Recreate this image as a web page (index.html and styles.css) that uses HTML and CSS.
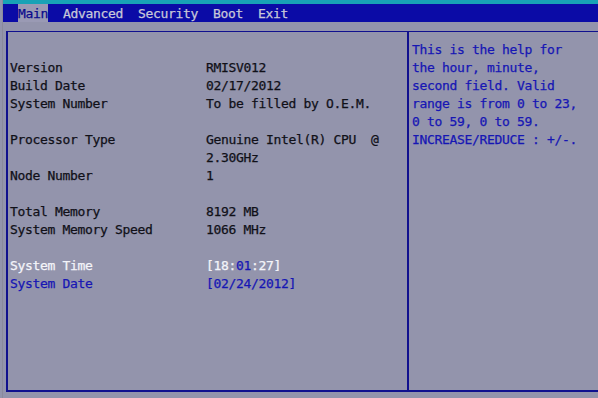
FILE: index.html
```html
<!DOCTYPE html>
<html lang="en">
<head>
    <meta charset="UTF-8">
    <title>BIOS Setup - Main</title>
    <link rel="stylesheet" href="styles.css">
</head>
<body>
    <div class="top-strip"></div>
    <div class="menu-bar">
        <span class="menu-item active">Main</span>
        <span class="menu-item">Advanced</span>
        <span class="menu-item">Security</span>
        <span class="menu-item">Boot</span>
        <span class="menu-item">Exit</span>
    </div>

    <div class="frame">
        <div class="info-panel">
            <div class="row blank"></div>
            <div class="row"><span class="label">Version</span><span class="value">RMISV012</span></div>
            <div class="row"><span class="label">Build Date</span><span class="value">02/17/2012</span></div>
            <div class="row"><span class="label">System Number</span><span class="value">To be filled by O.E.M.</span></div>
            <div class="row blank"></div>
            <div class="row"><span class="label">Processor Type</span><span class="value">Genuine Intel(R) CPU&nbsp;&nbsp;@</span></div>
            <div class="row"><span class="label"></span><span class="value">2.30GHz</span></div>
            <div class="row"><span class="label">Node Number</span><span class="value">1</span></div>
            <div class="row blank"></div>
            <div class="row"><span class="label">Total Memory</span><span class="value">8192 MB</span></div>
            <div class="row"><span class="label">System Memory Speed</span><span class="value">1066 MHz</span></div>
            <div class="row blank"></div>
            <div class="row selected"><span class="label">System Time</span><span class="value">[18:<span class="field">01</span>:27]</span></div>
            <div class="row editable"><span class="label">System Date</span><span class="value">[02/24/2012]</span></div>
        </div>

        <div class="help-panel">
            <p>This is the help for<br>
            the hour, minute,<br>
            second field. Valid<br>
            range is from 0 to 23,<br>
            0 to 59, 0 to 59.<br>
            INCREASE/REDUCE : +/-.</p>
        </div>
    </div>
</body>
</html>
```

FILE: styles.css
```css
/* page basics */
body {
    margin: 0;
    background-color: #9394ac;
    font-family: "DejaVu Sans Mono", "Liberation Mono", monospace;
    font-size: 13px;
    letter-spacing: -0.33px;
    color: #101018;
    -webkit-text-stroke: 0.25px;
    overflow: hidden;
    height: 398px;
    border-left: 1px solid #8a8a9c;
    margin-left: 2px;
}

/* thin cyan strip at the very top */
.top-strip {
    height: 4px;
    margin-left: -3px;
    background-color: #18a2b6;
}

/* top menu */
.menu-bar {
    display: flex;
    gap: 15px;
    height: 18px;
    line-height: 19px;
    margin-left: -3px;
    padding-left: 18px;
    background-color: #0b0ba6;
}

.menu-item {
    color: #c8c8d8;
}

.menu-item.active {
    background-color: #9a9ab4;
    color: #0a0a8c;
}

/* main frame with two panels */
.frame {
    display: flex;
    margin-top: 9px;
    margin-left: 3px;
    margin-right: -20px;
    height: 358px;
    border: 2px solid #10108e;
    border-top-width: 1px;
}

.info-panel {
    width: 397px;
    padding: 9px 0 0 2px;
    border-right: 2px solid #10108e;
}

.row {
    display: flex;
    height: 18px;
    line-height: 18px;
    white-space: pre;
}

.label {
    width: 196px;
}

.row.selected {
    color: #f4f4fa;
}

.row.selected .field {
    color: #1616b4;
}

.row.editable {
    color: #1616b4;
}

.help-panel {
    padding: 9px 0 0 3px;
    color: #1616b4;
}

.help-panel p {
    margin: 0;
    line-height: 18px;
    white-space: nowrap;
}
```
